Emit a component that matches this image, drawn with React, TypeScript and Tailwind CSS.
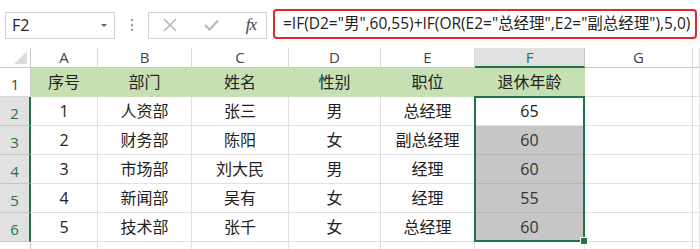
import React from "react";

const cols = [
  { key: "A", w: "w-[67px]" },
  { key: "B", w: "w-[94px]" },
  { key: "C", w: "w-[97px]" },
  { key: "D", w: "w-[92px]" },
  { key: "E", w: "w-[94px]" },
  { key: "F", w: "w-[110px]" },
  { key: "G", w: "w-[108px]" },
  { key: "H", w: "flex-1" },
];

const header = ["序号", "部门", "姓名", "性别", "职位", "退休年龄"];

const rows = [
  ["1", "人资部", "张三", "男", "总经理", "65"],
  ["2", "财务部", "陈阳", "女", "副总经理", "60"],
  ["3", "市场部", "刘大民", "男", "经理", "60"],
  ["4", "新闻部", "吴有", "女", "经理", "55"],
  ["5", "技术部", "张千", "女", "总经理", "60"],
];

const font = "font-['Segoe_UI','Open_Sans','Noto_Sans_CJK_SC',sans-serif]";

function FormulaBar() {
  return (
    <div className="flex items-center h-[48px] pt-[10px] pb-[8px] pl-[5px] pr-[3px]">
      {/* name box */}
      <div className="shrink-0 w-[110px] h-[27px] border border-[#d4d4d4] flex items-center justify-between pl-[6px] pr-[7px]">
        <span className="text-[16px] text-[#222]">F2</span>
        <span className="w-0 h-0 border-l-[3px] border-r-[3px] border-t-[3px] border-l-transparent border-r-transparent border-t-[#666]" />
      </div>
      <div className="shrink-0 w-[33px] flex flex-col items-center gap-[3px]">
        <span className="w-[2px] h-[2px] bg-[#999]" />
        <span className="w-[2px] h-[2px] bg-[#999]" />
        <span className="w-[2px] h-[2px] bg-[#999]" />
      </div>
      {/* buttons */}
      <div className="shrink-0 w-[119px] h-[27px] border border-[#d4d4d4] flex items-center pl-[14px] pr-[10px] justify-between">
        <svg width="14" height="14" viewBox="0 0 14 14">
          <path d="M1 1 L13 13 M13 1 L1 13" stroke="#b8b8b8" strokeWidth="1.6" />
        </svg>
        <svg width="15" height="12" viewBox="0 0 15 12">
          <path d="M1 6 L5.5 10.5 L14 1.5" stroke="#b8b8b8" strokeWidth="2.2" fill="none" />
        </svg>
        <span className="font-['Liberation_Serif',serif] italic text-[17px] text-[#444] tracking-[-1px]">
          fx
        </span>
      </div>
      <div className="shrink-0 w-[6px]" />
      {/* formula box */}
      <div className="flex-1 min-w-0 overflow-hidden h-[30px] -mt-[2px] border-2 border-[#e5262b] rounded-[4px] flex items-center pl-[8px] text-[15.5px] text-[#222] whitespace-nowrap">
        =IF(D2="男",60,55)+IF(OR(E2="总经理",E2="副总经理"),5,0)
      </div>
    </div>
  );
}

function ColumnHeader() {
  return (
    <div className="flex h-[20px]">
      <div className="w-[31px] border-r border-b border-[#c8c8c8] flex items-end justify-end pr-[3px] pb-[3px]">
        <svg width="13" height="13" viewBox="0 0 13 13">
          <path d="M13 0 L13 13 L0 13 Z" fill="#dcdcdc" />
        </svg>
      </div>
      {cols.map((c) =>
        c.key === "F" ? (
          <div
            key={c.key}
            className={`${c.w} bg-[#e1e1e1] border-r border-[#c8c8c8] border-b-2 border-b-[#217346] flex items-center justify-center text-[15px] text-[#217346]`}
          >
            {c.key}
          </div>
        ) : (
          <div
            key={c.key}
            className={`${c.w} border-r border-b border-[#dadada] border-b-[#c8c8c8] flex items-center justify-center text-[15px] text-[#444]`}
          >
            {c.key === "H" ? "" : c.key}
          </div>
        )
      )}
    </div>
  );
}

function RowNum({ n, selected }: { n: string; selected: boolean }) {
  return (
    <div
      className={`w-[31px] h-[29px] flex items-end justify-center pb-[1px] text-[15px] border-b ${
        selected
          ? "bg-[#e1e1e1] text-[#217346] border-b-[#c6c6c6] border-r-2 border-r-[#217346]"
          : "bg-white text-[#444] border-b-[#d8d8d8] border-r border-r-[#c8c8c8]"
      }`}
    >
      {n}
    </div>
  );
}

export default function App() {
  return (
    <div className={`w-[700px] h-[249px] overflow-hidden bg-white ${font}`}>
      <FormulaBar />
      <ColumnHeader />
      {/* row 1 */}
      <div className="flex h-[29px]">
        <RowNum n="1" selected={false} />
        {cols.map((c, i) => (
          <div
            key={c.key}
            className={`${c.w} border-r border-b border-[#e1e1e1] flex items-center justify-center text-[16px] text-[#222] ${
              i < 6 ? "bg-[#c6e0b4] border-r-[#c6e0b4] border-b-[#c6e0b4]" : "bg-white"
            }`}
          >
            {header[i] ?? ""}
          </div>
        ))}
      </div>
      {/* data rows */}
      {rows.map((r, ri) => (
        <div key={ri} className="flex h-[29px]">
          <RowNum n={String(ri + 2)} selected />
          {cols.map((c, i) => {
            const isF = c.key === "F";
            const shaded = isF && ri > 0;
            return (
              <div
                key={c.key}
                className={`${c.w} border-r border-b flex items-center justify-center text-[16px] ${
                  shaded
                    ? "bg-[#c6c6c6] border-[#b4b4b4] text-[#333]"
                    : "bg-white border-[#e1e1e1] text-[#222]"
                } ${isF && ri === 0 ? "relative" : ""}`}
              >
                {r[i] ?? ""}
                {isF && ri === 0 && (
                  <div className="absolute left-[-1px] top-[-1px] w-[111px] h-[146px] border-2 border-[#217346] pointer-events-none">
                    <span className="absolute right-[-4px] bottom-[-4px] w-[6px] h-[6px] bg-[#217346] outline outline-1 outline-white" />
                  </div>
                )}
              </div>
            );
          })}
        </div>
      ))}
      {/* row 7 partial */}
      <div className="flex h-[29px]">
        <RowNum n="" selected={false} />
        {cols.map((c) => (
          <div key={c.key} className={`${c.w} border-r border-b border-[#e1e1e1]`} />
        ))}
      </div>
    </div>
  );
}
